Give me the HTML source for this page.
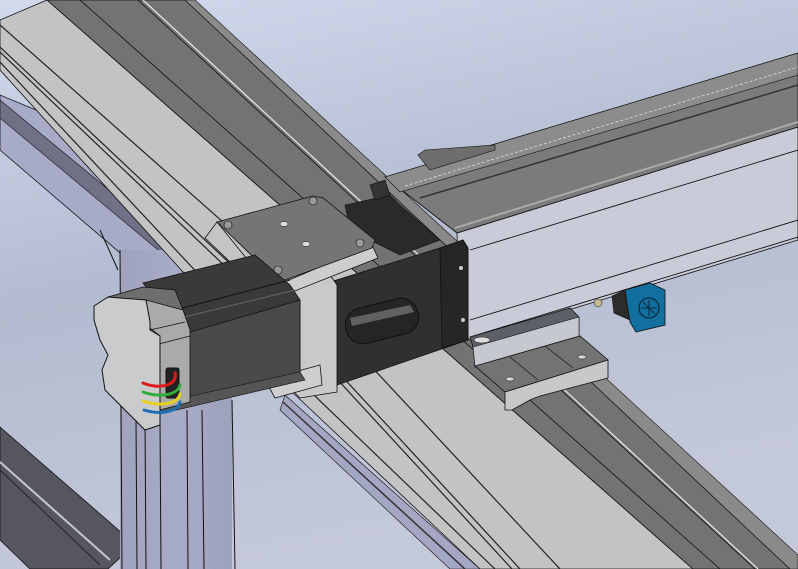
<!DOCTYPE html>
<html><head><meta charset="utf-8"><style>
html,body{margin:0;padding:0;width:798px;height:569px;overflow:hidden}
svg{display:block}
</style></head><body>
<svg width="798" height="569" viewBox="0 0 798 569" xmlns="http://www.w3.org/2000/svg">
<defs>
<linearGradient id="bg" x1="0" y1="0" x2="0.3" y2="1">
<stop offset="0" stop-color="#d2daee"/><stop offset="0.5" stop-color="#b3bbd0"/><stop offset="1" stop-color="#c4c9da"/>
</linearGradient>
<linearGradient id="col" x1="0" y1="0" x2="1" y2="0">
<stop offset="0" stop-color="#9ea2bc"/><stop offset="0.5" stop-color="#a9acc6"/><stop offset="1" stop-color="#9da1bb"/>
</linearGradient>
</defs>
<rect width="798" height="569" fill="url(#bg)"/>
<!-- left bluish frame beam -->
<polygon points="0,95 0,150 210,330 260,330 260,290 60,120" fill="#a8abc7" stroke="#111" stroke-width="0.8"/>
<polygon points="0,100 0,118 230,310 240,298" fill="#6f7286" stroke="#111" stroke-width="0.6"/>
<polygon points="285,395 480,569 450,569 280,410" fill="#a3a7c3" stroke="#111" stroke-width="0.6"/>
<line x1="283" y1="402" x2="465" y2="569" stroke="#333" stroke-width="1.5"/>
<!-- bottom-left dark beam -->
<polygon points="0,427 122,533 122,556 108,569 30,569 0,540" fill="#55565f" stroke="#111" stroke-width="0.8"/>
<line x1="0" y1="462" x2="110" y2="560" stroke="#c4c6d2" stroke-width="2"/>
<line x1="0" y1="470" x2="100" y2="565" stroke="#22232a" stroke-width="1"/>
<!-- columns -->
<rect x="120" y="250" width="112" height="319" fill="url(#col)"/>
<g stroke="#111" stroke-width="1">
<line x1="120" y1="250" x2="122" y2="569"/><line x1="136" y1="420" x2="137" y2="569"/><line x1="145" y1="420" x2="146" y2="569"/>
<line x1="160" y1="420" x2="161" y2="569"/><line x1="187" y1="410" x2="188" y2="569"/><line x1="202" y1="410" x2="204" y2="569"/><line x1="232" y1="400" x2="235" y2="569"/>
<line x1="100" y1="230" x2="118" y2="270"/>
</g>
<!-- main diagonal beam light face -->
<polygon points="0,20 47,0 693,569 480,569 290,390 0,70" fill="#c3c3c3" stroke="#111" stroke-width="0.8"/>
<g stroke="#222" stroke-width="1.2" fill="none">
<polyline points="0,25 300,290 560,569"/>
<polyline points="0,47 290,320 520,569"/>
<polyline points="0,52 290,328 512,569"/>
<polyline points="0,62 290,372 495,569"/>
</g>
<line x1="70" y1="0" x2="700" y2="560" stroke="#e6e6e6" stroke-width="3"/>
<!-- dark top face -->
<polygon points="47,0 185,0 790,569 693,569" fill="#737373" stroke="#111" stroke-width="0.8"/>
<g stroke="#111" stroke-width="0.8">
<line x1="80" y1="0" x2="720" y2="569"/><line x1="138" y1="0" x2="755" y2="569"/>
</g>
<line x1="143" y1="0" x2="758" y2="569" stroke="#e8e8e8" stroke-width="1.2"/>
<polygon points="185,0 195,0 798,555 798,569 790,569" fill="#8a8a8a" stroke="#111" stroke-width="0.6"/>
<!-- rail side face -->
<polygon points="457,233 798,127 798,240 470,340 460,330" fill="#c9ccd8" stroke="#111" stroke-width="0.8"/>
<g stroke="#111" stroke-width="0.9">
<line x1="470" y1="250" x2="798" y2="150"/><line x1="470" y1="320" x2="798" y2="220"/><line x1="470" y1="337" x2="798" y2="237"/>
</g>
<!-- rail top face -->
<polygon points="385,177 798,53 798,127 457,233" fill="#7b7b7b" stroke="#111" stroke-width="0.8"/>
<polygon points="385,177 798,53 798,75 400,192" fill="#8c8c8c" stroke="#111" stroke-width="0.6"/>
<line x1="405" y1="186" x2="798" y2="67" stroke="#e0e0e0" stroke-width="0.8" stroke-dasharray="3,2"/>
<line x1="420" y1="198" x2="798" y2="85" stroke="#333" stroke-width="1.5"/>
<line x1="455" y1="228" x2="798" y2="122" stroke="#aaa" stroke-width="2"/>
<polygon points="418,155 425,150 495,145 495,150 430,170" fill="#6e6e6e" stroke="#111" stroke-width="0.6"/>
<!-- brackets under rail -->
<polygon points="470,337 570,308 579,317 579,338 475,367 473,347" fill="#5e6068" stroke="#111" stroke-width="0.8"/>
<polygon points="473,347 579,317 579,338 475,367" fill="#c6c8d0" stroke="#111" stroke-width="0.6"/>
<ellipse cx="482" cy="340" rx="8" ry="3" fill="#ddd" stroke="#111" stroke-width="0.5"/>
<polygon points="475,366 580,336 608,360 505,392" fill="#737373" stroke="#111" stroke-width="0.8"/>
<polygon points="505,392 608,360 608,378 540,396 530,400 512,410 505,410" fill="#c8c8c8" stroke="#111" stroke-width="0.8"/>
<line x1="510" y1="357" x2="538" y2="380" stroke="#111" stroke-width="0.7"/>
<line x1="545" y1="346" x2="573" y2="368" stroke="#111" stroke-width="0.7"/>
<ellipse cx="510" cy="379" rx="4" ry="2" fill="#ddd" stroke="#111" stroke-width="0.5"/>
<ellipse cx="582" cy="357" rx="4" ry="2" fill="#ddd" stroke="#111" stroke-width="0.5"/>
<!-- sensor -->
<polygon points="612,296 625,290 632,300 630,320 614,313" fill="#2c2c2c" stroke="#111" stroke-width="0.6"/>
<circle cx="598" cy="303" r="4" fill="#c8b890" stroke="#333" stroke-width="0.6"/>
<polygon points="625,290 650,283 665,290 665,325 636,332 630,322" fill="#12709f" stroke="#111" stroke-width="0.8"/>
<circle cx="649" cy="308" r="10" fill="none" stroke="#0a2a40" stroke-width="1.3"/>
<path d="M641,308 L657,308 M649,300 L649,316 M643,302 L655,314" stroke="#0a2a40" stroke-width="1"/>
<!-- dark block behind plate -->
<polygon points="345,205 390,195 400,205 440,240 400,255 350,230" fill="#2a2a2a" stroke="#111" stroke-width="0.6"/>
<polygon points="370,185 385,180 390,195 375,200" fill="#333" stroke="#111" stroke-width="0.6"/>
<!-- carriage dark block -->
<polygon points="330,282 440,248 463,240 468,248 468,340 337,385" fill="#303030" stroke="#111" stroke-width="0.8"/>
<polygon points="440,248 463,240 468,248 468,340 442,348" fill="#262626" stroke="#111" stroke-width="0.8"/>
<circle cx="461" cy="268" r="2" fill="#ccc"/><circle cx="463" cy="320" r="2" fill="#ccc"/>
<rect x="345" y="303" width="74" height="36" rx="17" transform="rotate(-14 382 321)" fill="#252525" stroke="#111" stroke-width="1"/>
<polygon points="350,318 410,305 414,312 352,326" fill="#8a8a8a" opacity="0.6"/>
<!-- light flange -->
<polygon points="290,285 330,275 337,285 337,392 300,398 292,390" fill="#c9c9c9" stroke="#111" stroke-width="0.8"/>
<polygon points="265,380 320,365 322,385 275,398" fill="#cfcfcf" stroke="#111" stroke-width="0.8"/>
<!-- plate -->
<polygon points="205,238 217,222 272,290 270,300" fill="#c4c4c4" stroke="#111" stroke-width="0.8"/>
<polygon points="270,288 372,245 378,258 272,300" fill="#cdcdcd" stroke="#111" stroke-width="0.8"/>
<polygon points="217,222 313,196 323,198 375,240 372,248 285,280 275,278" fill="#757575" stroke="#111" stroke-width="0.8"/>
<g fill="#999" stroke="#111" stroke-width="0.6">
<circle cx="228" cy="225" r="4"/><circle cx="313" cy="201" r="4"/><circle cx="360" cy="243" r="4"/><circle cx="278" cy="270" r="4"/>
</g>
<g fill="#ddd" stroke="#111" stroke-width="0.5"><ellipse cx="284" cy="224" rx="4" ry="2.5"/><ellipse cx="306" cy="244" rx="4" ry="2.5"/></g>
<!-- motor body -->
<polygon points="143,283 255,255 290,285 300,300 300,372 190,402 180,330" fill="#3a3a3a" stroke="#111" stroke-width="0.8"/>
<polygon points="180,335 300,300 300,372 190,402" fill="#4a4a4a" stroke="#111" stroke-width="0.8"/>
<line x1="175" y1="310" x2="290" y2="280" stroke="#111" stroke-width="1"/>
<line x1="180" y1="318" x2="295" y2="290" stroke="#666" stroke-width="1"/>
<polygon points="150,405 300,372 305,380 155,415" fill="#555" stroke="#111" stroke-width="0.6"/>
<!-- end cap -->
<polygon points="108,297 143,287 175,290 183,310 150,322" fill="#6d6f6e" stroke="#111" stroke-width="0.8"/>
<polygon points="146,300 183,310 190,330 190,402 160,410 160,336 150,328" fill="#a9abab" stroke="#111" stroke-width="0.8"/>
<line x1="150" y1="330" x2="185" y2="322" stroke="#111" stroke-width="0.8"/>
<line x1="155" y1="345" x2="190" y2="336" stroke="#111" stroke-width="0.8"/>
<polygon points="94,306 108,297 146,300 150,322 150,330 160,336 160,425 145,430 105,390 102,370 108,355 100,340 94,320" fill="#c9cbcd" stroke="#111" stroke-width="1"/>
<rect x="166" y="368" width="13" height="30" rx="2" fill="#222" stroke="#111"/>
<g fill="none" stroke-width="3" stroke-linecap="round">
<path d="M143,383 C160,390 178,385 175,373" stroke="#e01a1a"/>
<path d="M143,392 C160,398 178,395 180,385" stroke="#2fae3a"/>
<path d="M143,401 C160,407 178,404 180,394" stroke="#e8d21a"/>
<path d="M144,410 C160,415 178,412 180,402" stroke="#1c6fb5"/>
</g>
</svg>
</body></html>
